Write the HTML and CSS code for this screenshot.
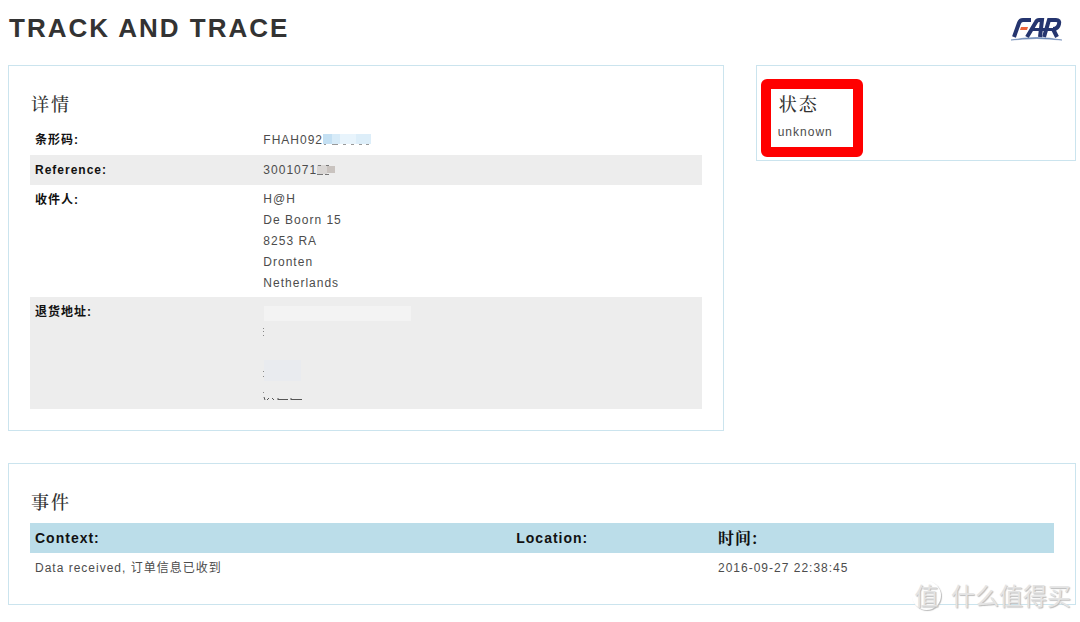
FILE: index.html
```html
<!DOCTYPE html>
<html lang="zh-CN">
<head>
<meta charset="utf-8">
<title>Track and Trace</title>
<link rel="stylesheet" href="styles.css">
</head>
<body>
<header class="page-header">
  <h1 class="page-title">TRACK AND TRACE</h1>
  <svg class="logo" viewBox="0 0 52 26" role="img" aria-label="FAR">
    <g fill="none" stroke="#25356f" stroke-width="4">
      <path d="M3 22 8 8Q9 5 12 5H20"/>
      <path d="M16 22 25 7Q26 5 28 5H31L29 22"/>
      <path d="M33 22 38 5H45Q49 5 48 9 47 14 42 14"/>
      <path d="M42 14 46 22"/>
      <path d="M22 14.500H45" stroke-width="3"/>
    </g>
    <path d="M10 12H17L16 15H9Z" fill="#ee6338"/>
    <path d="M0 25Q26 20 51 25Q26 22 0 25Z" fill="#5879ac" stroke="#5879ac" stroke-width=".5"/>
  </svg>
</header>
<main class="layout">
  <section class="card">
    <h2 class="card-title">详情</h2>
    <table class="details">
      <tbody>
        <tr>
          <th scope="row">条形码:</th>
          <td>FHAH092<svg class="mask" width="48" height="14" viewBox="0 0 48 14" aria-hidden="true">
            <path fill="#c4e0f3" d="M0 0h9v10H0z"/><path fill="#d7ebf8" d="M9 0h8v10H9z"/><path fill="#e8f4fc" d="M17 0h16v10H17z"/><path fill="#ddeef9" d="M33 0h15v10H33z"/>
            <path stroke="#999" d="M1 10.500h2M9 10.500h6M20 10.500h3M28 10.500h3M36 10.500h3M43 10.500h3"/>
          </svg></td>
        </tr>
        <tr>
          <th scope="row">Reference:</th>
          <td>3001071<svg class="mask" width="20" height="14" viewBox="0 0 20 14" aria-hidden="true">
            <path fill="#d9d6d4" d="M0 1h10v9H0z"/><path fill="#c9c3bf" d="M10 2h8v7h-8z"/>
            <path stroke="#777" d="M0 10.500h6M8 10.500h4M1 1.500h3M9 1.500h3"/>
          </svg></td>
        </tr>
        <tr class="address">
          <th scope="row">收件人:</th>
          <td>H@H<br>De Boorn 15<br>8253 RA<br>Dronten<br>Netherlands</td>
        </tr>
        <tr class="address">
          <th scope="row">退货地址:</th>
          <td><svg class="mask-block" width="150" height="105" viewBox="0 0 150 105" aria-hidden="true">
            <path fill="#f3f3f3" d="M1 5h147v15H1z"/>
            <path fill="#e9ebef" d="M1 59h37v21H1z"/>
            <path stroke="#888" d="M0 27.500h1M0 30.500h1M0 34.500h1M0 70.500h1M0 75.500h1M0 91.500h1"/>
            <path fill="none" stroke="#555" d="M1 96l1 3M4 99l2-2M9 97l2 2M15 97v2M15 98.500h10M28 97v2M28 98.500h11"/>
          </svg></td>
        </tr>
      </tbody>
    </table>
  </section>
  <section class="card status-card">
    <div class="status">
      <h2 class="card-title">状态</h2>
      <p class="status-value">unknown</p>
      <span class="highlight"></span>
    </div>
  </section>
  <section class="card events-card">
    <h2 class="card-title">事件</h2>
    <table class="events">
      <thead>
        <tr><th scope="col" class="col-context">Context:</th><th scope="col" class="col-location">Location:</th><th scope="col" class="col-time">时间:</th></tr>
      </thead>
      <tbody>
        <tr><td>Data received, 订单信息已收到</td><td></td><td>2016-09-27 22:38:45</td></tr>
      </tbody>
    </table>
    <div class="watermark">
      <span class="watermark-badge">值</span>
      <span>什么值得买</span>
    </div>
  </section>
</main>
</body>
</html>
```
FILE: styles.css
```css
* {
  box-sizing: border-box;
}

body {
  margin: 0;
  padding: 0 4px 16px 8px;
  background: #fff;
  color: #4c4c4c;
  font: 12px/20px "Liberation Sans", Arial, "Noto Sans CJK SC", sans-serif;
  letter-spacing: 1px;
}

.page-header {
  display: flex;
  align-items: center;
  justify-content: space-between;
  height: 56px;
  padding: 0 13px 0 1px;
  margin-bottom: 9px;
}

.page-title {
  margin: 0;
  color: #333;
  font-size: 26px;
  line-height: 32px;
  letter-spacing: 2px;
}

.logo {
  width: 52px;
  height: 26px;
}

.layout {
  display: grid;
  grid-template-columns: 715fr 320fr;
  gap: 32px;
  align-items: start;
}

.card {
  min-width: 0;
  padding: 21px;
  border: 1px solid #cbe4ee;
}

.card-title {
  margin: 0 0 6px;
  padding-left: 1px;
  color: #333;
  font-family: "Noto Serif CJK SC", "Noto Sans CJK SC", serif;
  font-size: 18px;
  font-weight: 500;
  line-height: 32px;
  letter-spacing: 2px;
}

table {
  width: 100%;
  border-collapse: collapse;
  table-layout: fixed;
}

th,
td {
  padding: 5px;
  text-align: left;
  vertical-align: top;
}

th {
  color: #111;
}

.details th {
  width: 34%;
}

.details tr:nth-child(even) {
  background: #ededed;
}

.address td {
  padding: 4px 5px 3px;
  line-height: 21px;
}

.mask {
  vertical-align: -4px;
}

.mask-block {
  display: block;
}

.status-card {
  padding-bottom: 18px;
}

.status {
  position: relative;
}

.status .card-title {
  margin-bottom: 3px;
}

.status-value {
  margin: 0;
}

.highlight {
  position: absolute;
  top: -8px;
  left: -17px;
  width: 102px;
  height: 78px;
  border: 10px solid #f00;
  border-radius: 6px;
}

.events-card {
  position: relative;
  grid-column: 1 / -1;
}

.col-context {
  width: 47%;
}

.col-location {
  width: 19.7%;
}

.events th {
  background: #bbdde9;
  font-size: 14px;
}

.events .col-time {
  font-family: "Noto Serif CJK SC", "Noto Sans CJK SC", serif;
  font-size: 16px;
}

.watermark {
  position: absolute;
  right: 4px;
  bottom: -7px;
  display: flex;
  align-items: center;
  gap: 10px;
  color: #e4e4e4;
  font-family: "Noto Sans CJK SC", sans-serif;
  font-size: 24px;
  line-height: 32px;
  letter-spacing: 0;
  text-shadow: 1px 1px 1px #bbb;
}

.watermark-badge {
  width: 29px;
  height: 29px;
  border-radius: 50%;
  background: #fff;
  box-shadow: 1px 1px 1px #bbb;
  line-height: 28px;
  text-align: center;
}
```
